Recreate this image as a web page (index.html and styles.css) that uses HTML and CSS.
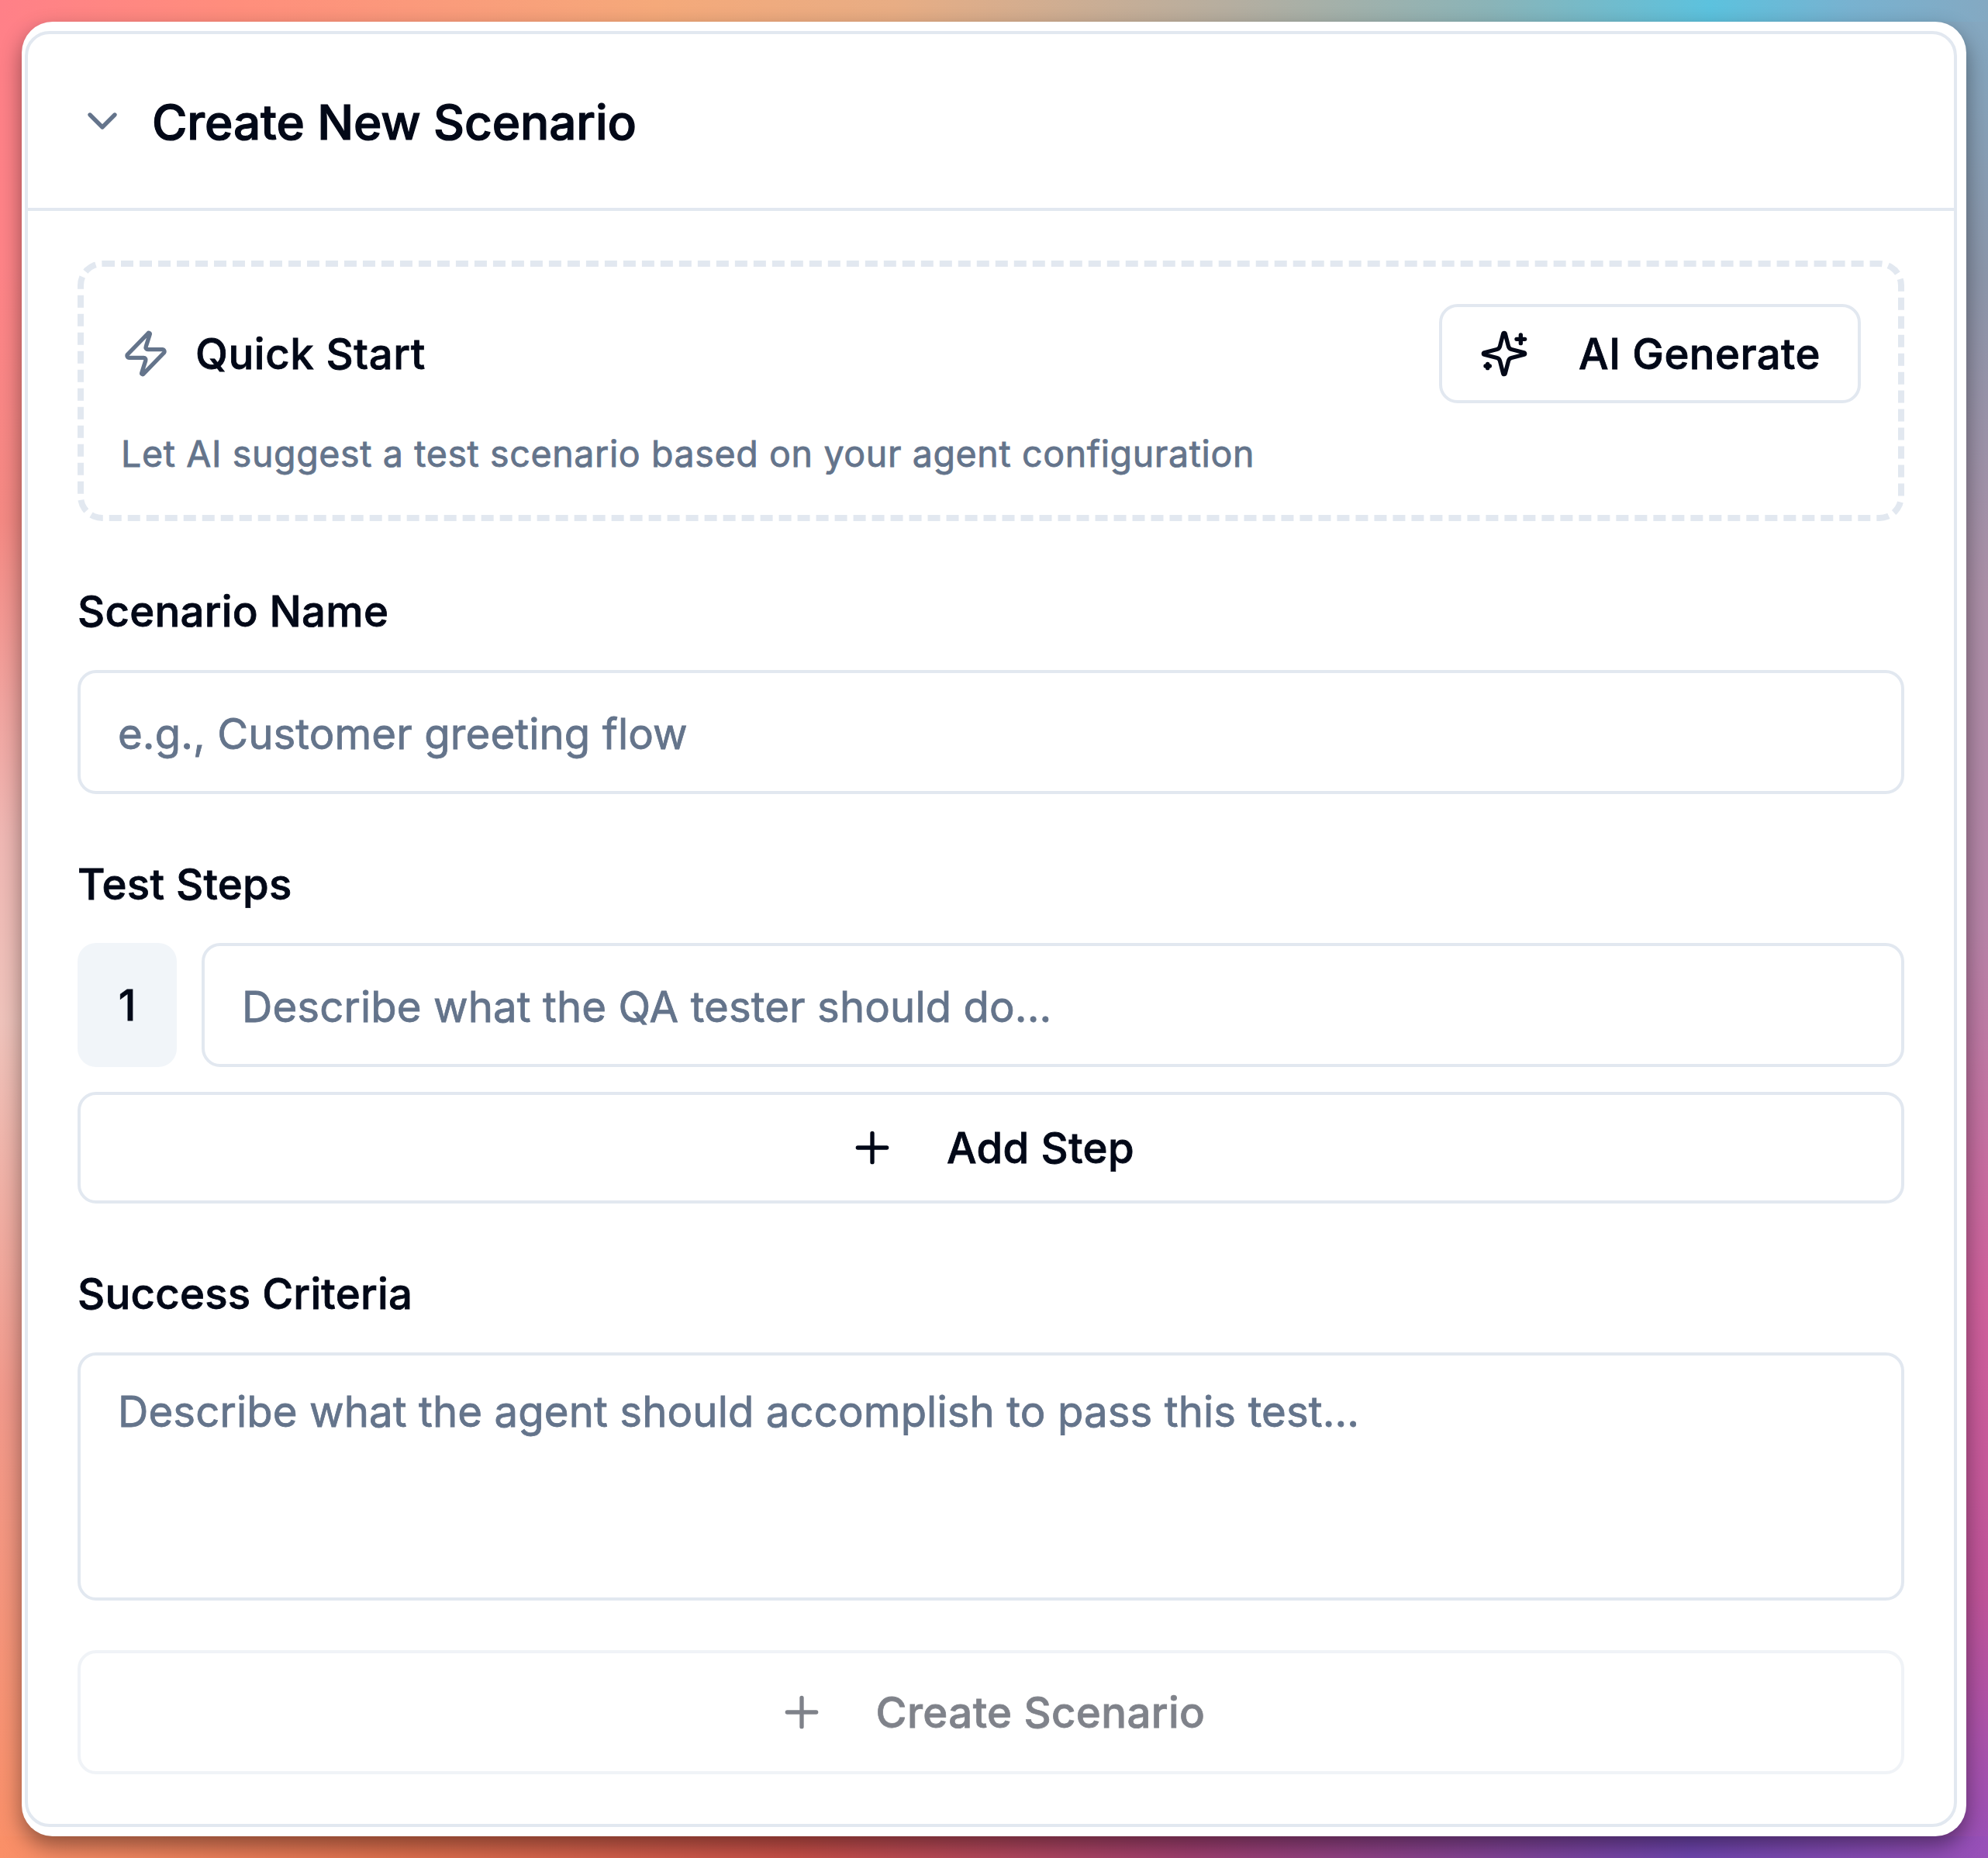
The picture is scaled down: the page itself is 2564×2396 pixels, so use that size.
FILE: index.html
```
<!DOCTYPE html>
<html lang="en">
<head>
    <meta charset="UTF-8">
    <meta name="viewport" content="width=device-width, initial-scale=1.0">
    <title>Create New Scenario</title>
    <link rel="stylesheet" href="styles.css">
</head>
<body>
    <div class="window">
        <div class="card">
            <div class="card-header">
                <svg class="icon muted" viewBox="0 0 24 24"><path d="m6 9 6 6 6-6"/></svg>
                <h2>Create New Scenario</h2>
            </div>
            <form class="card-body" id="scenarioForm">
                <div class="quick-start">
                    <div class="quick-row">
                        <div class="quick-title">
                            <svg class="icon muted" viewBox="0 0 24 24"><path d="M4 14a1 1 0 0 1-.78-1.63l9.9-10.2a.5.5 0 0 1 .86.46l-1.92 6.02A1 1 0 0 0 13 10h7a1 1 0 0 1 .78 1.63l-9.9 10.2a.5.5 0 0 1-.86-.46l1.92-6.02A1 1 0 0 0 11 14z"/></svg>
                            <span>Quick Start</span>
                        </div>
                        <button type="button" class="btn generate">
                            <svg class="icon" viewBox="0 0 24 24">
                                <path d="M9.937 15.5A2 2 0 0 0 8.5 14.063l-6.135-1.582a.5.5 0 0 1 0-.962L8.5 9.936A2 2 0 0 0 9.937 8.5l1.582-6.135a.5.5 0 0 1 .963 0L14.063 8.5A2 2 0 0 0 15.5 9.937l6.135 1.581a.5.5 0 0 1 0 .964L15.5 14.063a2 2 0 0 0-1.437 1.437l-1.582 6.135a.5.5 0 0 1-.963 0z"/>
                                <path d="M20 3v4M22 5h-4M4 17v2M5 18H3"/>
                            </svg>
                            <span>AI Generate</span>
                        </button>
                    </div>
                    <p class="hint">Let AI suggest a test scenario based on your agent configuration</p>
                </div>

                <div class="field">
                    <label for="name">Scenario Name</label>
                    <input type="text" id="name" name="name" placeholder="e.g., Customer greeting flow">
                </div>

                <div class="field">
                    <label for="step1">Test Steps</label>
                    <div class="step">
                        <div class="step-number">1</div>
                        <input type="text" id="step1" name="step1" placeholder="Describe what the QA tester should do...">
                    </div>
                    <button type="button" class="btn add-step">
                        <svg class="icon" viewBox="0 0 24 24"><path d="M5 12h14M12 5v14"/></svg>
                        <span>Add Step</span>
                    </button>
                </div>

                <div class="field">
                    <label for="criteria">Success Criteria</label>
                    <textarea id="criteria" name="criteria" placeholder="Describe what the agent should accomplish to pass this test..."></textarea>
                </div>

                <button type="submit" class="btn create" disabled>
                    <svg class="icon" viewBox="0 0 24 24"><path d="M5 12h14M12 5v14"/></svg>
                    <span>Create Scenario</span>
                </button>
            </form>
        </div>
    </div>
</body>
</html>
```
FILE: styles.css
```
* {
    box-sizing: border-box;
}

html {
    height: 100%;
}

body {
    margin: 0;
    height: 2396px;
    padding: 28px;
    font-family: Inter, "Liberation Sans", sans-serif;
    font-size: 54.5px;
    color: #020817;
    -webkit-text-stroke: 0.8px;
    background:
        linear-gradient(to right, #ff8088, #ff8e7c 12%, #f5a97a 33%, #e8ad84 45%, #b5aea0 62%, #8ab4b8 75%, #5cc2de 86%, #78b2d0 93%, #84a9c2) 0 0 / 100% 28px no-repeat,
        linear-gradient(to right, #fa9068, #e0704e 20%, #c84f48 40%, #a03f70 60%, #7046b0 85%, #9850b8) 0 100% / 100% 28px no-repeat,
        linear-gradient(#ff8088, #ff8488 14%, #f58a84 28%, #f0b8b4 45%, #f0c4bc 55%, #f29a8c 75%, #fa9068) 0 0 / 50% 100% no-repeat,
        linear-gradient(#84a9c2, #8c96aa 15%, #ac90a8 32%, #b884a8 50%, #d0609c 70%, #c0549a 86%, #9850b8) 100% 0 / 50% 100% no-repeat;
}

.window {
    height: 2340px;
    padding: 12px 12px 12px 4px;
    border-radius: 40px;
    background-color: #fff;
    box-shadow: 0 12px 28px rgba(0, 0, 0, 0.42);
}

.card {
    height: 100%;
    border: 4px solid #e2e8f0;
    border-radius: 32px;
}

.card-header {
    display: flex;
    align-items: center;
    gap: 32px;
    height: 228px;
    padding: 0 64px;
    border-bottom: 4px solid #e2e8f0;
}

h2 {
    margin: 0;
    padding-top: 3px;
    font-size: 62px;
    font-weight: 500;
    line-height: 64px;
    letter-spacing: -0.1px;
    -webkit-text-stroke: 1.2px;
}

.card-body {
    display: flex;
    flex-direction: column;
    gap: 64px;
    padding: 64px;
}

.icon {
    flex-shrink: 0;
    width: 64px;
    height: 64px;
    fill: none;
    stroke: currentColor;
    stroke-width: 2;
    stroke-linecap: round;
    stroke-linejoin: round;
}

.muted {
    color: #64748b;
}

.quick-start {
    height: 336px;
    padding: 48px;
    border: 8px dashed #e2e8f0;
    border-radius: 32px;
}

.quick-row {
    display: flex;
    align-items: center;
    justify-content: space-between;
}

.quick-title {
    display: flex;
    align-items: center;
    gap: 32px;
    font-weight: 500;
    letter-spacing: 0.6px;
}

.hint {
    margin: 33px 0 0;
    font-size: 46.5px;
    line-height: 64px;
    letter-spacing: 0.63px;
    color: #64748b;
    white-space: nowrap;
}

.btn {
    display: flex;
    align-items: center;
    justify-content: center;
    gap: 64px;
    padding: 0 44px;
    border: 4px solid #e2e8f0;
    border-radius: 24px;
    background-color: #fff;
    color: #020817;
    font-family: inherit;
    font-size: 54.5px;
    font-weight: 500;
    letter-spacing: 0.4px;
    white-space: nowrap;
}

.generate {
    width: 544px;
    height: 128px;
}

.add-step {
    height: 144px;
}

.create {
    height: 160px;
}

.btn:disabled {
    opacity: 0.5;
}

.field {
    display: flex;
    flex-direction: column;
    gap: 32px;
}

label {
    height: 96px;
    line-height: 104px;
    font-weight: 500;
    letter-spacing: 0.25px;
}

input,
textarea {
    display: block;
    width: 100%;
    border: 4px solid #e2e8f0;
    border-radius: 24px;
    background-color: #fff;
    font-family: inherit;
    font-size: 54.5px;
    letter-spacing: 0.1px;
    outline: none;
    resize: none;
}

input {
    height: 160px;
    padding: 4px 48px 0;
}

textarea {
    height: 320px;
    padding: 32px 48px;
    line-height: 80px;
}

input::placeholder,
textarea::placeholder {
    color: #64748b;
    opacity: 1;
}

.step {
    display: flex;
    gap: 32px;
}

.step-number {
    display: flex;
    align-items: center;
    justify-content: center;
    flex: 0 0 128px;
    border-radius: 24px;
    background-color: #f1f5f9;
    font-weight: 500;
}
```
